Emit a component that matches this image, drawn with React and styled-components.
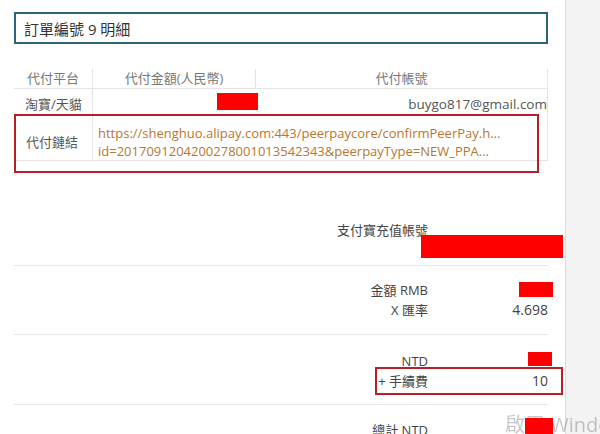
import styled, { createGlobalStyle } from "styled-components";

const GlobalStyle = createGlobalStyle`
  html, body {
    margin: 0;
    padding: 0;
    background: #f3f3f3;
  }
  body {
    font-family: "Open Sans", "Noto Sans CJK TC", sans-serif;
    color: #3a3a3a;
  }
`;

const Page = styled.div`
  box-sizing: border-box;
  width: 566px;
  height: 434px;
  padding: 12px 0 0 14px;
  background: #fff;
  border-right: 1px solid #dcdcdc;
  overflow: hidden;
`;

const TitleBox = styled.div`
  box-sizing: border-box;
  width: 534px;
  height: 32px;
  display: flex;
  align-items: center;
  padding-left: 8px;
  border: 2px solid #2d6378;
  font-size: 15px;
  color: #333;
`;

const Table = styled.div`
  width: 534px;
  margin-top: 22px;
  font-size: 13px;
`;

const Row = styled.div`
  position: relative;
  display: grid;
  grid-template-columns: 79px 163px 292px;
  height: ${(p) => p.$h};
  border-bottom: ${(p) => (p.$line ? "1px solid #e4e4e4" : "none")};
`;

const HeadCell = styled.div`
  text-align: center;
  color: #777;
  border-right: 1px solid #e2e2e2;
  margin-top: 3px;
  height: 19px;
  line-height: 19px;
`;

const Cell = styled.div`
  display: flex;
  align-items: ${(p) => p.$valign || "center"};
  justify-content: ${(p) => p.$justify || "flex-start"};
  padding: ${(p) => p.$pad || "0"};
  border-right: ${(p) => (p.$divider ? "1px solid #e2e2e2" : "none")};
  grid-column: ${(p) => p.$span || "auto"};
  color: #555;
  font-size: ${(p) => p.$size || "13px"};
`;

const LinkText = styled.div`
  color: #b5772f;
  font-size: 13px;
  line-height: 18px;
  white-space: nowrap;
`;

const Annotation = styled.div`
  position: absolute;
  box-sizing: border-box;
  border: 2px solid #b81f27;
  left: ${(p) => p.$left};
  top: ${(p) => p.$top};
  width: ${(p) => p.$w};
  height: ${(p) => p.$h};
  pointer-events: none;
`;

const Redact = styled.span`
  position: relative;
  z-index: 2;
  display: inline-block;
  width: ${(p) => p.$w}px;
  height: ${(p) => p.$h}px;
  margin: ${(p) => p.$m || "0"};
  background: #ff0000;
  vertical-align: top;
`;

const FloatingRedact = styled(Redact)`
  position: absolute;
  left: ${(p) => p.$left}px;
  top: ${(p) => p.$top}px;
`;

const Summary = styled.div`
  width: 534px;
  font-size: 13px;
`;

const Section = styled.div`
  padding: ${(p) => p.$pad};
  border-bottom: ${(p) => (p.$last ? "none" : "1px solid #e6e6e6")};
`;

const Line = styled.div`
  position: relative;
  display: grid;
  grid-template-columns: 414px 120px;
  line-height: 20px;
  height: 20px;
`;

const Label = styled.div`
  text-align: right;
  color: #444;
`;

const Value = styled.div`
  position: relative;
  text-align: right;
  color: #444;
  font-size: 14px;
`;

const Watermark = styled.div`
  position: fixed;
  z-index: 1;
  left: 505px;
  top: 409px;
  font-family: "Open Sans", "Noto Sans CJK TC", sans-serif;
  font-size: 20px;
  color: rgba(0, 0, 0, 0.22);
  white-space: nowrap;
`;

export default function App() {
  return (
    <>
      <GlobalStyle />
      <Page>
        <TitleBox>訂單編號 9 明細</TitleBox>

        <Table>
          <Row $h="22px" $line>
            <HeadCell>代付平台</HeadCell>
            <HeadCell>代付金額(人民幣)</HeadCell>
            <HeadCell>代付帳號</HeadCell>
          </Row>
          <Row $h="25px">
            <Cell $divider $pad="4px 0 0 11px">淘寶/天貓</Cell>
            <Cell $justify="flex-end" $valign="flex-start">
              <Redact $w={41} $h={17} $m="4px -2px 0 0" />
            </Cell>
            <Cell $divider $justify="flex-end" $pad="4px 0 0 0" $size="13.5px">
              buygo817@gmail.com
            </Cell>
          </Row>
          <Row $h="46px" $line>
            <Cell $divider $pad="9px 0 0 12px">代付鏈結</Cell>
            <Cell $span="2 / 4" $divider $pad="9px 0 0 5px">
              <LinkText>
                https://shenghuo.alipay.com:443/peerpaycore/confirmPeerPay.h...
                <br />
                id=2017091204200278001013542343&amp;peerpayType=NEW_PPA...
              </LinkText>
            </Cell>
            <Annotation $left="0" $top="0" $w="525px" $h="59px" />
          </Row>
        </Table>

        <Summary>
          <Section $pad="59px 0 25px">
            <Line>
              <Label>支付寶充值帳號</Label>
              <Value>
                <FloatingRedact $w={142} $h={23} $left={-7} $top={15} />
              </Value>
            </Line>
          </Section>
          <Section $pad="14px 0 14px">
            <Line>
              <Label>金額 RMB</Label>
              <Value>
                <Redact $w={34} $h={15} $m="2px -5px 0 0" />
              </Value>
            </Line>
            <Line>
              <Label>X 匯率</Label>
              <Value>4.698</Value>
            </Line>
          </Section>
          <Section $pad="16px 0 13px">
            <Line>
              <Label>NTD</Label>
              <Value>
                <Redact $w={24} $h={14} $m="1px -4px 0 0" />
              </Value>
            </Line>
            <Line>
              <Label>+ 手續費</Label>
              <Value>10</Value>
              <Annotation $left="361px" $top="-4px" $w="188px" $h="28px" />
            </Line>
          </Section>
          <Section $pad="15px 0 0" $last>
            <Line>
              <Label>總計 NTD</Label>
              <Value>
                <Redact $w={28} $h={20} $m="-2px -5px 0 0" />
              </Value>
            </Line>
          </Section>
        </Summary>
      </Page>
      <Watermark>啟用 Windows</Watermark>
    </>
  );
}
